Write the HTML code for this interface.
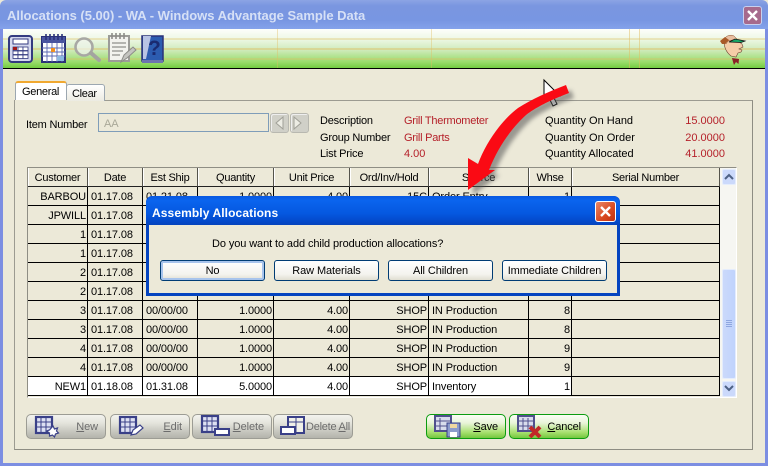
<!DOCTYPE html>
<html><head><meta charset="utf-8"><style>
*{box-sizing:border-box}
html,body{margin:0;padding:0}
body{width:768px;height:466px;overflow:hidden;position:relative;background:#ECE9D8;font:11px "Liberation Sans",sans-serif;color:#000;letter-spacing:-.1px}
.a{position:absolute}
.t{position:absolute;white-space:nowrap;line-height:14px}
.red{color:#B5212A}
table{position:absolute;left:28px;top:168px;border-collapse:separate;border-spacing:0;table-layout:fixed;width:692px;font:11px "Liberation Sans",sans-serif}
th{font-weight:normal;height:19px;padding:2px 0 0;border-right:1px solid #55544c;border-bottom:1px solid #222;box-shadow:inset 1px 0 0 #fff;background:#ECE9D8;letter-spacing:-.25px}
td{height:19px;padding:2px 1px 0 3px;border-right:1px solid #000;border-bottom:1px solid #000;background:#ECE9D8;white-space:nowrap;overflow:hidden;letter-spacing:-.12px}
.r{text-align:right}
.n td{background:#fff}
.n td:last-child{background:#ECE9D8}
.btn{position:absolute;top:414px;width:80px;height:25px;border-radius:5px;border:1px solid #9c9c94;background:linear-gradient(#f3f3ee,#e4e4dc 35%,#c4c4bc 75%,#b4b4ac);color:#6c6c6c}
.btn.g{border:1px solid #0c9c10;background:linear-gradient(#fbfdf6,#e8f4d8 35%,#a8e070 75%,#74c83e);color:#000}
.btn span{position:absolute;top:5px;right:7px;line-height:14px;white-space:nowrap}
.btn u{text-decoration:underline}
.btn svg{position:absolute;left:7px;top:0}
.db{position:absolute;top:260px;width:105px;height:21px;border:1px solid #003C74;border-radius:3px;background:linear-gradient(#fff,#f4f3ee 70%,#e0ded2);text-align:center;line-height:20px}
</style></head><body>
<!-- window frame -->
<div class="a" style="left:0;top:0;width:768px;height:29px;background:linear-gradient(#8CA4E4,#7A96E0 20%,#7896E2 70%,#84A2EA);border-radius:6px 6px 0 0"></div>
<div class="a" style="left:0;top:29px;width:3px;height:437px;background:#7C8EE2"></div>
<div class="a" style="left:765px;top:29px;width:3px;height:437px;background:#7C8EE2"></div>
<div class="a" style="left:0;top:463px;width:768px;height:3px;background:#7C8EE2"></div>
<div class="t" style="left:7px;top:9px;font-size:13px;font-weight:bold;color:#D6E0F6;letter-spacing:-.02px">Allocations (5.00) - WA - Windows Advantage Sample Data</div>
<div class="a" style="left:743px;top:6px;width:19px;height:19px;border-radius:3px;border:1px solid #c8d0ee;background:#A66A8C"></div>
<svg class="a" style="left:743px;top:6px" width="19" height="19"><path d="M5 5L14 14M14 5L5 14" stroke="#fff" stroke-width="2.4"/></svg>
<!-- toolbar -->
<div class="a" style="left:3px;top:29px;width:762px;height:40px;background:linear-gradient(#fdfefb,#eef8e6 25%,#cdeab8 55%,#98dc6a 85%,#72cc42);border-bottom:1px solid #000"></div>
<div class="a" style="left:3px;top:38px;width:762px;height:2px;background:rgba(225,200,120,.4)"></div>
<div class="a" style="left:3px;top:48px;width:762px;height:2px;background:rgba(225,190,100,.45)"></div>
<div class="a" style="left:3px;top:58px;width:762px;height:2px;background:rgba(225,190,100,.35)"></div>
<div class="a" style="left:277px;top:29px;width:1px;height:39px;background:rgba(225,190,100,.4)"></div>
<div class="a" style="left:431px;top:29px;width:1px;height:39px;background:rgba(225,190,100,.4)"></div>
<div class="a" style="left:629px;top:29px;width:1px;height:39px;background:rgba(225,190,100,.5)"></div>
<div class="a" style="left:639px;top:29px;width:1px;height:39px;background:rgba(225,190,100,.5)"></div>
<!-- toolbar icons -->
<svg class="a" style="left:0;top:28px" width="170" height="40">
<rect x="9" y="8" width="23" height="26" rx="3" fill="#D4D8EE" stroke="#333A80" stroke-width="2"/>
<rect x="13" y="11" width="15" height="5" fill="#fff" stroke="#333A80"/>
<g fill="#fff" stroke="#333A80" stroke-width=".8"><rect x="13" y="19" width="5" height="3.500"/><rect x="18" y="19" width="5" height="3.500"/><rect x="23" y="19" width="5" height="3.500"/><rect x="13" y="23" width="5" height="3.500"/><rect x="18" y="23" width="5" height="3.500"/><rect x="23" y="23" width="5" height="3.500"/><rect x="13" y="27" width="5" height="3.500"/><rect x="18" y="27" width="5" height="3.500"/><rect x="23" y="27" width="5" height="3.500"/></g>
<rect x="13" y="19" width="4" height="3" fill="#A01818"/>
<rect x="42" y="9" width="23" height="25" fill="#fff" stroke="#2A3178" stroke-width="2"/>
<rect x="42" y="9" width="23" height="6" fill="#4A55A0"/>
<path d="M46 6v6M50 6v6M54 6v6M58 6v6M62 6v6" stroke="#2A3178" stroke-width="1.6"/>
<path d="M42 20h23M42 24h23M42 28h23M47 15v19M52 15v19M57 15v19M62 15v19" stroke="#5A68B0" stroke-width=".9"/>
<rect x="51" y="20" width="4" height="4" fill="#F09020"/>
<rect x="57" y="28" width="7" height="5" fill="#8CB8E0"/>
<circle cx="84" cy="19" r="8.500" fill="#F0F4EC" fill-opacity=".7" stroke="#A8A8A4" stroke-width="2.600"/>
<path d="M91 25l8 7" stroke="#A4A4A0" stroke-width="4" stroke-linecap="round"/>
<rect x="109" y="8" width="20" height="25" fill="#F2F2EE" stroke="#9C9C98" stroke-width="2"/>
<path d="M112 5v6M116 5v6M120 5v6M124 5v6" stroke="#8C8C88" stroke-width="1.6"/>
<path d="M112 15h14M112 19h14M112 23h11M112 27h8" stroke="#A0A09C" stroke-width="1.6"/>
<path d="M121 34l3-7 9-8 3 3-9 8z" fill="#C4C4C0" stroke="#8C8C88"/>
<rect x="142" y="8" width="21" height="25" fill="#2C5CB0" stroke="#2A3178" stroke-width="1.500"/>
<path d="M143 8h8L146 31h-3z" fill="#B8C4E4"/>
<path d="M142 32h21v3h-21z" fill="#6C74B0"/>
<text x="148" y="27" font-family="Liberation Sans,sans-serif" font-size="21" font-weight="bold" fill="#1A2A70">?</text>
</svg>
<!-- mascot -->
<svg class="a" style="left:718px;top:32px" width="32" height="34">
<path d="M6 9c0 6 2 11 7 15l5 1 2-4 3-1 1-2-3-1 4-2-1-3-4-3-8-3z" fill="#F5CDA8" stroke="#6a4030" stroke-width=".6"/>
<path d="M7 6c2-3 8-4 10-1l2 2-9 2-2 3-3-3z" fill="#E8BFA0" stroke="#8c5030" stroke-width=".5"/>
<path d="M2 9l5-4 4 3-4 4-3 0z" fill="#A85A28"/>
<path d="M11 10L17 7l10 2-4 1.500z" fill="#18A868" stroke="#111" stroke-width=".8"/>
<path d="M14 26l7 1-.5 5-2.500-2-2 3-1-3z" fill="#8A2228"/>
</svg>
<!-- tab panel -->
<div class="a" style="left:14px;top:100px;width:739px;height:350px;border:1px solid #9c9b91;border-right-color:#8e8d83;border-bottom-color:#8e8d83"></div>
<div class="a" style="left:66px;top:84px;width:39px;height:17px;background:linear-gradient(#fff,#ECEBE2);border:1px solid #9CA7B0;border-bottom:0;border-radius:3px 3px 0 0"></div>
<div class="t" style="left:72px;top:87px;letter-spacing:-.3px">Clear</div>
<div class="a" style="left:15px;top:81px;width:52px;height:20px;background:#fff;border:1px solid #9CA7B0;border-bottom:0;border-top:2px solid #F0A830;border-radius:3px 3px 0 0"></div>
<div class="t" style="left:22px;top:85px;letter-spacing:-.3px">General</div>
<div class="a" style="left:15px;top:100px;width:52px;height:2px;background:#ECE9D8"></div>
<!-- item -->
<div class="t" style="left:26px;top:118px;letter-spacing:-.2px">Item Number</div>
<div class="a" style="left:98px;top:113px;width:171px;height:19px;border:1px solid #7F9DB9;background:#ECE9D8"></div>
<div class="t" style="left:104px;top:117px;color:#A9A898">AA</div>
<div class="a" style="left:270px;top:113px;width:19px;height:20px;border:1px solid #B8B8B0;border-radius:3px;background:#D0D0C8;box-shadow:inset 1px 1px 0 #eee"></div>
<div class="a" style="left:290px;top:113px;width:19px;height:20px;border:1px solid #B8B8B0;border-radius:3px;background:#D0D0C8;box-shadow:inset 1px 1px 0 #eee"></div>
<svg class="a" style="left:270px;top:113px" width="40" height="20"><path d="M13 4L6 10l7 6zM24 4l7 6-7 6z" fill="#ECECE4" stroke="#A0A098"/></svg>
<!-- info -->
<div class="t" style="left:320px;top:114px;letter-spacing:-.2px">Description</div>
<div class="t" style="left:320px;top:131px;letter-spacing:-.2px">Group Number</div>
<div class="t" style="left:320px;top:147px;letter-spacing:-.2px">List Price</div>
<div class="t red" style="left:404px;top:114px;letter-spacing:-.25px">Grill Thermometer</div>
<div class="t red" style="left:404px;top:131px;letter-spacing:-.25px">Grill Parts</div>
<div class="t red" style="left:404px;top:147px;letter-spacing:0">4.00</div>
<div class="t" style="left:545px;top:114px;letter-spacing:0">Quantity On Hand</div>
<div class="t" style="left:545px;top:131px;letter-spacing:0">Quantity On Order</div>
<div class="t" style="left:545px;top:147px;letter-spacing:0">Quantity Allocated</div>
<div class="t red" style="right:43px;top:114px;letter-spacing:0">15.0000</div>
<div class="t red" style="right:43px;top:131px;letter-spacing:0">20.0000</div>
<div class="t red" style="right:43px;top:147px;letter-spacing:0">41.0000</div>
<!-- grid -->
<div class="a" style="left:27px;top:167px;width:710px;height:231px;border:1px solid #8f8e84;border-right-color:#fff;border-bottom-color:#fff"></div>
<table>
<colgroup><col style="width:60px"><col style="width:55px"><col style="width:55px"><col style="width:76px"><col style="width:76px"><col style="width:79px"><col style="width:100px"><col style="width:43px"><col style="width:148px"></colgroup>
<tr><th>Customer</th><th>Date</th><th>Est Ship</th><th>Quantity</th><th>Unit Price</th><th>Ord/Inv/Hold</th><th>Source</th><th>Whse</th><th>Serial Number</th></tr>
<tr><td class="r">BARBOU</td><td>01.17.08</td><td>01.21.08</td><td class="r">1.0000</td><td class="r">4.00</td><td class="r">15C</td><td>Order Entry</td><td class="r">1</td><td></td></tr>
<tr><td class="r">JPWILL</td><td>01.17.08</td><td>00/00/00</td><td class="r">1.0000</td><td class="r">4.00</td><td class="r">SHOP</td><td>IN Production</td><td class="r">8</td><td></td></tr>
<tr><td class="r">1</td><td>01.17.08</td><td>00/00/00</td><td class="r">1.0000</td><td class="r">4.00</td><td class="r">SHOP</td><td>IN Production</td><td class="r">8</td><td></td></tr>
<tr><td class="r">1</td><td>01.17.08</td><td>00/00/00</td><td class="r">1.0000</td><td class="r">4.00</td><td class="r">SHOP</td><td>IN Production</td><td class="r">8</td><td></td></tr>
<tr><td class="r">2</td><td>01.17.08</td><td>00/00/00</td><td class="r">1.0000</td><td class="r">4.00</td><td class="r">SHOP</td><td>IN Production</td><td class="r">8</td><td></td></tr>
<tr><td class="r">2</td><td>01.17.08</td><td>00/00/00</td><td class="r">1.0000</td><td class="r">4.00</td><td class="r">SHOP</td><td>IN Production</td><td class="r">8</td><td></td></tr>
<tr><td class="r">3</td><td>01.17.08</td><td>00/00/00</td><td class="r">1.0000</td><td class="r">4.00</td><td class="r">SHOP</td><td>IN Production</td><td class="r">8</td><td></td></tr>
<tr><td class="r">3</td><td>01.17.08</td><td>00/00/00</td><td class="r">1.0000</td><td class="r">4.00</td><td class="r">SHOP</td><td>IN Production</td><td class="r">8</td><td></td></tr>
<tr><td class="r">4</td><td>01.17.08</td><td>00/00/00</td><td class="r">1.0000</td><td class="r">4.00</td><td class="r">SHOP</td><td>IN Production</td><td class="r">9</td><td></td></tr>
<tr><td class="r">4</td><td>01.17.08</td><td>00/00/00</td><td class="r">1.0000</td><td class="r">4.00</td><td class="r">SHOP</td><td>IN Production</td><td class="r">9</td><td></td></tr>
<tr class="n"><td class="r">NEW1</td><td>01.18.08</td><td>01.31.08</td><td class="r">5.0000</td><td class="r">4.00</td><td class="r">SHOP</td><td>Inventory</td><td class="r">1</td><td></td></tr>
</table>
<!-- scrollbar -->
<div class="a" style="left:720px;top:168px;width:16px;height:229px;background:#F6F6F2"></div>
<div class="a" style="left:722px;top:269px;width:14px;height:110px;background:linear-gradient(90deg,#CBD9FB,#C0D3FC);border:1px solid #E4ECFC;border-radius:2px"></div>
<svg class="a" style="left:725px;top:320px" width="8" height="8"><path d="M1 .5h6M1 2.500h6M1 4.500h6M1 6.500h6" stroke="#8EA6E0"/></svg>
<div class="a" style="left:722px;top:169px;width:14px;height:16px;background:#CBD9FB;border:1px solid #E4ECFC;border-radius:2px"></div>
<div class="a" style="left:722px;top:381px;width:14px;height:16px;background:#CBD9FB;border:1px solid #E4ECFC;border-radius:2px"></div>
<svg class="a" style="left:722px;top:169px" width="14" height="228"><path d="M3 10l4-4 4 4M3 217l4 4 4-4" fill="none" stroke="#4D6185" stroke-width="2"/></svg>
<!-- bottom buttons -->
<div class="btn" style="left:26px"><svg width="28" height="25"><rect x="2" y="2" width="16" height="16" fill="#DDE0F2" stroke="#3A4088" stroke-width="2.200"/><path d="M2 7h16M2 12h16M7 3v15M12 3v15" stroke="#3A4088"/><path d="M19 11l1.500 3 3-1-1 3 2 2-3 1-1 3-2-2-3 1 0-3-3-2 3-1z" fill="#fff" stroke="#3A4088" stroke-width="1.200"/></svg><span><u>N</u>ew</span></div>
<div class="btn" style="left:110px"><svg width="28" height="25"><rect x="2" y="2" width="16" height="16" fill="#DDE0F2" stroke="#3A4088" stroke-width="2.200"/><path d="M2 7h16M2 12h16M7 3v15M12 3v15" stroke="#3A4088"/><path d="M13 20l2-5 7-5 3 3-7 6z" fill="#fff" stroke="#3A4088" stroke-width="1.200"/></svg><span><u>E</u>dit</span></div>
<div class="btn" style="left:192px"><svg width="32" height="25"><rect x="2" y="1" width="16" height="16" fill="#DDE0F2" stroke="#3A4088" stroke-width="2.200"/><path d="M2 6h16M2 11h16M7 2v15M12 2v15" stroke="#3A4088"/><rect x="15" y="14" width="14" height="6" fill="#fff" stroke="#3A4088" stroke-width="2"/></svg><span><u>D</u>elete</span></div>
<div class="btn" style="left:273px"><svg width="30" height="25" style="left:5px"><rect x="9" y="2" width="16" height="16" fill="#F0F0E8" stroke="#3A4088" stroke-width="2"/><path d="M9 7h16M17 2v16" stroke="#3A4088"/><rect x="2" y="12" width="14" height="7" fill="#fff" stroke="#3A4088" stroke-width="2"/></svg><span style="right:2px;letter-spacing:-.25px">Delete <u>A</u>ll</span></div>
<div class="btn g" style="left:426px"><svg width="30" height="25"><rect x="1" y="1" width="16" height="15" fill="#D8DCEC" stroke="#50508C" stroke-width="2"/><path d="M1 6h16M1 11h16M6 3v13" stroke="#50508C"/><rect x="13" y="8" width="13" height="14" fill="#8C9CCC" stroke="#3A4088"/><rect x="16" y="9" width="7" height="4" fill="#F0D8A0"/><rect x="16" y="17" width="7" height="5" fill="#fff"/></svg><span><u>S</u>ave</span></div>
<div class="btn g" style="left:509px"><svg width="30" height="25"><rect x="1" y="1" width="16" height="15" fill="#D8DCEC" stroke="#50508C" stroke-width="2"/><path d="M1 6h16M1 11h16M6 3v13M11 3v13" stroke="#50508C"/><path d="M13 12l10 10M23 12L13 22" stroke="#C02828" stroke-width="4"/></svg><span><u>C</u>ancel</span></div>
<!-- arrow + cursor -->
<svg class="a" style="left:440px;top:70px" width="170" height="130">
<defs><filter id="b" x="-20%" y="-20%" width="140%" height="140%"><feGaussianBlur stdDeviation="2"/></filter></defs>
<path d="M104 10L104 33 109 28 113 36 117 34 113 26 120 26z" fill="#fff" stroke="#000"/>
<g fill="#555" opacity=".55" filter="url(#b)" transform="translate(5,5)"><path d="M129 23C108 31 95 38 86 45 76 54 60 72 49 100l6 0L28 120 28 88l10 6C46 72 62 50 78 38 92 29 108 22 126 15z"/></g>
<path d="M129 23C108 31 95 38 86 45 76 54 60 72 49 100l6 0L28 120 28 88l10 6C46 72 62 50 78 38 92 29 108 22 126 15z" fill="#FA0A14"/>
</svg>
<!-- dialog -->
<div class="a" style="left:146px;top:196px;width:474px;height:100px;background:#0A52D8;border-radius:6px 6px 0 0;border:3px solid #0544C0;border-top:0"></div>
<div class="a" style="left:146px;top:196px;width:474px;height:29px;background:linear-gradient(#0858E0,#0A64EE 15%,#0558E0 60%,#0348C8 90%,#0544BC);border-radius:7px 7px 0 0"></div>
<div class="a" style="left:149px;top:225px;width:468px;height:68px;background:#ECE9D8"></div>
<div class="t" style="left:152px;top:206px;font-size:12px;font-weight:bold;color:#fff;letter-spacing:.1px">Assembly Allocations</div>
<div class="a" style="left:595px;top:201px;width:21px;height:21px;border:1px solid #fff;border-radius:3px;background:linear-gradient(135deg,#E88868,#D84820 60%,#C03010)"></div>
<svg class="a" style="left:595px;top:201px" width="21" height="21"><path d="M6 6L15 15M15 6L6 15" stroke="#fff" stroke-width="2.400"/></svg>
<div class="t" style="left:212px;top:237px">Do you want to add child production allocations?</div>
<div class="db" style="left:160px;box-shadow:inset 0 0 0 2px #A8C4EC">No</div>
<div class="db" style="left:274px">Raw Materials</div>
<div class="db" style="left:388px">All Children</div>
<div class="db" style="left:502px">Immediate Children</div>
</body></html>
